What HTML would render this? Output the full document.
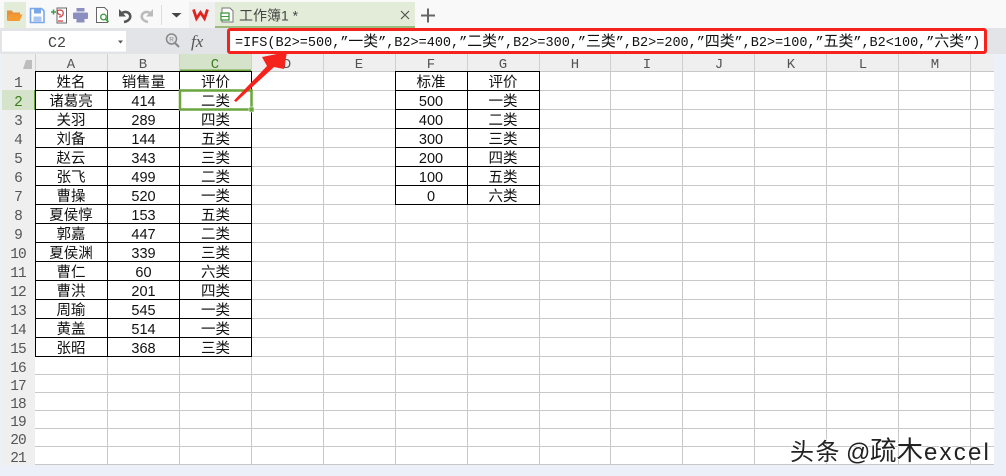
<!DOCTYPE html>
<html lang="zh"><head><meta charset="utf-8"><title>工作簿1</title>
<style>
html,body{margin:0;padding:0;width:1006px;height:476px;overflow:hidden;background:#fff}
svg{display:block}
text{font-family:"Liberation Sans","Noto Sans CJK SC",sans-serif;fill:#111}
.c text{font-size:14.5px;text-anchor:middle}
.h text{font-family:"Liberation Mono","Noto Serif CJK SC",monospace;font-size:14px;text-anchor:middle;fill:#555}
.n text{font-family:"Liberation Mono",monospace;font-size:14.5px;letter-spacing:-1px;text-anchor:middle;fill:#555}
.f{font-family:"Liberation Mono","Noto Sans CJK SC",monospace;font-size:13.5px;fill:#111}
.f tspan{font-size:14.85px;font-family:"Noto Sans CJK SC",sans-serif}
</style></head><body>
<svg width="1006" height="476" viewBox="0 0 1006 476" xmlns="http://www.w3.org/2000/svg">
<rect width="1006" height="476" fill="#ecf1f9"/>
<rect width="1006" height="28" fill="#f9f9f9"/>
<rect y="28" width="1006" height="26" fill="#e2e4e7"/>
<rect x="2" y="54" width="992" height="411" fill="#fff"/>
<rect x="2" y="54" width="992" height="17" fill="#efefef"/>
<rect x="2" y="71" width="33" height="394" fill="#efefef"/>
<rect x="180" y="54" width="72" height="17" fill="#d5e3cb"/>
<rect x="180" y="69.5" width="72" height="2" fill="#6aa63c"/>
<rect x="2" y="90" width="33" height="20" fill="#d5e3cb"/>
<rect x="34" y="90" width="2" height="20" fill="#6aa63c"/>
<path d="M35.500 54V71M107.500 54V71M179.500 54V71M251.500 54V71M323.500 54V71M395.500 54V71M467.500 54V71M539.500 54V71M610.500 54V71M682.500 54V71M754.500 54V71M826.500 54V71M898.500 54V71M970.500 54V71" stroke="#d0d0d0" fill="none"/>
<path d="M35 71.500H994M35 90.500H994M35 109.500H994M35 128.500H994M35 147.500H994M35 166.500H994M35 185.500H994M35 204.500H994M35 223.500H994M35 242.500H994M35 261.500H994M35 280.500H994M35 299.500H994M35 318.500H994M35 337.500H994M35 356.500H994M35 374.500H994M35 392.500H994M35 410.500H994M35 428.500H994M35 446.500H994M35 464.500H994M107.500 71V465M179.500 71V465M251.500 71V465M323.500 71V465M395.500 71V465M467.500 71V465M539.500 71V465M610.500 71V465M682.500 71V465M754.500 71V465M826.500 71V465M898.500 71V465M970.500 71V465" stroke="#c8c8c8" fill="none"/>
<path d="M35.500 71.500H251.500V356.500H35.500ZM35.500 90.500H251.500M35.500 109.500H251.500M35.500 128.500H251.500M35.500 147.500H251.500M35.500 166.500H251.500M35.500 185.500H251.500M35.500 204.500H251.500M35.500 223.500H251.500M35.500 242.500H251.500M35.500 261.500H251.500M35.500 280.500H251.500M35.500 299.500H251.500M35.500 318.500H251.500M35.500 337.500H251.500M107.500 71V356M179.500 71V356M395.500 71.500H539.500V204.500H395.500ZM395.500 90.500H539.500M395.500 109.500H539.500M395.500 128.500H539.500M395.500 147.500H539.500M395.500 166.500H539.500M395.500 185.500H539.500M467.500 71V204" stroke="#000" fill="none"/>
<g class="h"><text x="71" y="68">A</text><text x="143" y="68">B</text><text x="215" y="68" style="fill:#3d7d1e">C</text><text x="287" y="68">D</text><text x="359" y="68">E</text><text x="431" y="68">F</text><text x="503" y="68">G</text><text x="575" y="68">H</text><text x="647" y="68">I</text><text x="719" y="68">J</text><text x="791" y="68">K</text><text x="863" y="68">L</text><text x="935" y="68">M</text></g>
<g class="n"><text x="18" y="87">1</text><text x="18" y="106" style="fill:#3d7d1e">2</text><text x="18" y="125">3</text><text x="18" y="144">4</text><text x="18" y="163">5</text><text x="18" y="182">6</text><text x="18" y="201">7</text><text x="18" y="220">8</text><text x="18" y="239">9</text><text x="18" y="258">10</text><text x="18" y="277">11</text><text x="18" y="296">12</text><text x="18" y="315">13</text><text x="18" y="334">14</text><text x="18" y="353">15</text><text x="18" y="372">16</text><text x="18" y="390">17</text><text x="18" y="408">18</text><text x="18" y="426">19</text><text x="18" y="444">20</text><text x="18" y="462">21</text></g>
<g class="c">
<text x="71" y="87">姓名</text><text x="143.500" y="87">销售量</text><text x="215.500" y="87">评价</text>
<text x="71" y="106">诸葛亮</text><text x="143.500" y="106">414</text><text x="215.500" y="106">二类</text>
<text x="71" y="125">关羽</text><text x="143.500" y="125">289</text><text x="215.500" y="125">四类</text>
<text x="71" y="144">刘备</text><text x="143.500" y="144">144</text><text x="215.500" y="144">五类</text>
<text x="71" y="163">赵云</text><text x="143.500" y="163">343</text><text x="215.500" y="163">三类</text>
<text x="71" y="182">张飞</text><text x="143.500" y="182">499</text><text x="215.500" y="182">二类</text>
<text x="71" y="201">曹操</text><text x="143.500" y="201">520</text><text x="215.500" y="201">一类</text>
<text x="71" y="220">夏侯惇</text><text x="143.500" y="220">153</text><text x="215.500" y="220">五类</text>
<text x="71" y="239">郭嘉</text><text x="143.500" y="239">447</text><text x="215.500" y="239">二类</text>
<text x="71" y="258">夏侯渊</text><text x="143.500" y="258">339</text><text x="215.500" y="258">三类</text>
<text x="71" y="277">曹仁</text><text x="143.500" y="277">60</text><text x="215.500" y="277">六类</text>
<text x="71" y="296">曹洪</text><text x="143.500" y="296">201</text><text x="215.500" y="296">四类</text>
<text x="71" y="315">周瑜</text><text x="143.500" y="315">545</text><text x="215.500" y="315">一类</text>
<text x="71" y="334">黄盖</text><text x="143.500" y="334">514</text><text x="215.500" y="334">一类</text>
<text x="71" y="353">张昭</text><text x="143.500" y="353">368</text><text x="215.500" y="353">三类</text>
<text x="431" y="87">标准</text><text x="503" y="87">评价</text>
<text x="431" y="106">500</text><text x="503" y="106">一类</text>
<text x="431" y="125">400</text><text x="503" y="125">二类</text>
<text x="431" y="144">300</text><text x="503" y="144">三类</text>
<text x="431" y="163">200</text><text x="503" y="163">四类</text>
<text x="431" y="182">100</text><text x="503" y="182">五类</text>
<text x="431" y="201">0</text><text x="503" y="201">六类</text>
</g>
<rect x="180" y="90.500" width="71.500" height="19" fill="none" stroke="#6aa63c" stroke-width="2.500"/>
<rect x="249" y="107" width="5" height="5" fill="#6aa63c" stroke="#fff" stroke-width=".6"/>
<path d="M26 60H32V69H23Z" fill="#bdbdbd"/>
<!-- formula bar -->
<rect x="2" y="31" width="124" height="20.500" fill="#fff"/>
<text x="57" y="47" style="font-family:'Liberation Mono',monospace;font-size:15px;fill:#444;text-anchor:middle">C2</text>
<path d="M118 40.500h5l-2.500 3z" fill="#555"/>
<circle cx="171.500" cy="39" r="5" fill="none" stroke="#888" stroke-width="1.500"/><path d="M175 43l4 4" stroke="#888" stroke-width="2"/>
<text x="169.300" y="41.500" style="font-size:6.500px;fill:#888">R</text>
<text x="191" y="47" style="font-family:'Liberation Serif',serif;font-style:italic;font-size:17px;fill:#555">fx</text>
<rect x="228.500" y="29.500" width="757" height="23" rx="1.500" fill="#fff" stroke="#f5231c" stroke-width="3"/>
<text class="f" x="235" y="46">=IFS(B2&gt;=500,”<tspan>一类</tspan>”,B2&gt;=400,”<tspan>二类</tspan>”,B2&gt;=300,”<tspan>三类</tspan>”,B2&gt;=200,”<tspan>四类</tspan>”,B2&gt;=100,”<tspan>五类</tspan>”,B2&lt;100,”<tspan>六类</tspan>”)</text>
<polygon points="234,100.500 267,66 262,57 287,52 284,69 274,67 236,102" fill="#f5231c"/>
<!-- toolbar -->
<rect x="4" y="2" width="22" height="26" fill="#e2ecd8"/>
<path d="M7 10.500h5l1 2h7v2H10l-3 6z" fill="#e8903a"/><path d="M10 14.500h12.500l-3 6.500H7z" fill="#f59a33"/>
<path d="M30.500 8.500h11l2.500 2.500v11.500H30.500z" fill="#fff" stroke="#7aa7ea" stroke-width="1.600"/><rect x="34" y="9" width="7" height="4.500" fill="#7aa7ea"/><rect x="33.500" y="16.500" width="8" height="5" fill="#a9c6f2"/>
<path d="M57 8h9.500v15H57z" fill="#fff" stroke="#666"/><path d="M51 12h5M53.500 9.500v5" stroke="#3aa04a" stroke-width="1.500"/><path d="M59 17c5 0 6-7 1-7s-2 5 1 5M58 21h5" fill="none" stroke="#d53a3a" stroke-width="1.200"/>
<rect x="73" y="12.500" width="15" height="6.500" rx="1" fill="#8a8fc0"/><rect x="76.500" y="8" width="8" height="3.500" fill="#8a8fc0"/><rect x="76.500" y="18" width="8" height="4.500" fill="#8a8fc0"/>
<path d="M96.500 7.500h8l3 3v12h-11z" fill="#fff" stroke="#666"/><circle cx="103.500" cy="17" r="2.800" fill="none" stroke="#43a047" stroke-width="1.400"/><path d="M105.500 19l3 3" stroke="#43a047" stroke-width="1.800"/>
<path d="M124 22c5-1 7-4 6-7s-5-4-8-2" fill="none" stroke="#555" stroke-width="2.600"/><path d="M119 9v7.500h7z" fill="#555"/>
<path d="M148 22c-5-1-7-4-6-7s5-4 8-2" fill="none" stroke="#bbb" stroke-width="2.600"/><path d="M153 9v7.500h-7z" fill="#bbb"/>
<path d="M161.500 5v20" stroke="#ddd"/>
<path d="M171.500 13h10l-5 4.500z" fill="#444"/>
<rect x="189" y="2" width="26" height="26" fill="#f0f0f0"/>
<path d="M193.500 9.500l3 9 4-6 4 6 3-9" fill="none" stroke="#e0231e" stroke-width="2.800"/>
<rect x="215" y="2" width="200" height="25" fill="#e2ecd8"/>
<rect x="215" y="26" width="200" height="2" fill="#9dbb80"/>
<path d="M222 8h8l3 3v11h-11z" fill="#fff" stroke="#777"/><rect x="221" y="13" width="8" height="7" fill="#fff" stroke="#3f9a3f" stroke-width="1.300"/><path d="M221 16.500h8" stroke="#3f9a3f"/>
<text x="239" y="20.500" style="font-size:14px;fill:#444">工作簿1 *</text>
<path d="M401 11l8 8M409 11l-8 8" stroke="#555" stroke-width="1.200"/>
<path d="M428 8.500v14M421 15.500h14" stroke="#666" stroke-width="2"/>
<g style="fill:#222;stroke:#fff;stroke-width:1.200px;paint-order:stroke">
<text x="790" y="460" style="font-size:24px;fill:#222;letter-spacing:1.500px">头条</text>
<text x="846" y="460" style="font-size:24px;fill:#222">@</text>
<text x="870" y="460" style="font-size:26.500px;fill:#222">疏木</text>
<text x="924" y="460" style="font-size:24px;fill:#222;letter-spacing:2.200px">excel</text>
</g>
</svg>
</body></html>
